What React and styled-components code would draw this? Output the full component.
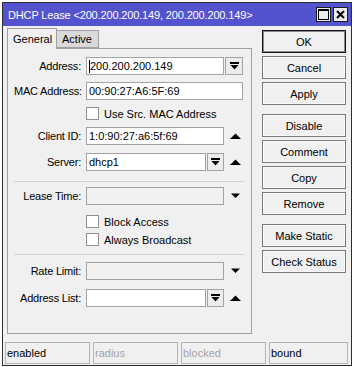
import React from 'react';
import styled, { createGlobalStyle } from 'styled-components';

const Global = createGlobalStyle`
  body {
    margin: 0;
    background: #ffffff;
    font-family: "Liberation Sans", Arial, sans-serif;
    font-size: 11px;
    color: #000;
  }
`;

// --- icons ---
const DropIcon = () => (
  <svg width="9" height="8" viewBox="0 0 9 8">
    <rect x="0" y="0" width="9" height="2" fill="#000" />
    <polygon points="0.5,3 8.5,3 4.5,7.5" fill="#000" />
  </svg>
);

const UpArrow = () => (
  <svg width="11" height="6" viewBox="0 0 11 6">
    <polygon points="0,6 11,6 5.5,0.5" fill="#000" />
  </svg>
);

const DownArrow = () => (
  <svg width="11" height="6" viewBox="0 0 11 6">
    <polygon points="1,0.5 10,0.5 5.5,5" fill="#000" />
  </svg>
);

const MaxIcon = () => (
  <svg width="11" height="11" viewBox="0 0 11 11">
    <rect x="0.5" y="0.5" width="10" height="10" fill="none" stroke="#000" strokeWidth="1" />
    <rect x="0" y="0" width="11" height="2" fill="#000" />
  </svg>
);

const CloseIcon = () => (
  <svg width="9" height="9" viewBox="0 0 9 9">
    <path d="M1 1 L8 8 M8 1 L1 8" stroke="#000" strokeWidth="2" />
  </svg>
);

export default function App() {
  return (
    <>
      <Global />
      <Window>
        <TitleBar>
          <Title>DHCP Lease &lt;200.200.200.149, 200.200.200.149&gt;</Title>
          <TitleButtons>
            <TitleBtn><MaxIcon /></TitleBtn>
            <TitleBtn><CloseIcon /></TitleBtn>
          </TitleButtons>
        </TitleBar>
        <Body>
          <Main>
            <LeftCol>
              <Tabs>
                <Tab active>General</Tab>
                <Tab>Active</Tab>
              </Tabs>
              <Panel>
                <Section top={8} bottom={10} line>
                  <Row>
                    <Label>Address:</Label>
                    <Field w={138}><Caret />200.200.200.149</Field>
                    <DropBtn w={18}><DropIcon /></DropBtn>
                  </Row>
                  <Row mt={7}>
                    <Label>MAC Address:</Label>
                    <Field w={157}>00:90:27:A6:5F:69</Field>
                  </Row>
                  <CheckRow mt={7}>
                    <Box />
                    <CheckText>Use Src. MAC Address</CheckText>
                  </CheckRow>
                  <Row mt={7}>
                    <Label>Client ID:</Label>
                    <Field w={138}>1:0:90:27:a6:5f:69</Field>
                    <Arrow><UpArrow /></Arrow>
                  </Row>
                  <Row mt={8}>
                    <Label>Server:</Label>
                    <Field w={120}>dhcp1</Field>
                    <DropBtn w={17}><DropIcon /></DropBtn>
                    <Arrow><UpArrow /></Arrow>
                  </Row>
                </Section>
                <Section top={5} bottom={8} line>
                  <Row>
                    <Label>Lease Time:</Label>
                    <Field w={138} disabled />
                    <Arrow><DownArrow /></Arrow>
                  </Row>
                  <CheckRow mt={10}>
                    <Box />
                    <CheckText>Block Access</CheckText>
                  </CheckRow>
                  <CheckRow mt={5}>
                    <Box />
                    <CheckText>Always Broadcast</CheckText>
                  </CheckRow>
                </Section>
                <Section top={7} bottom={0}>
                  <Row>
                    <Label>Rate Limit:</Label>
                    <Field w={138} disabled />
                    <Arrow><DownArrow /></Arrow>
                  </Row>
                  <Row mt={9}>
                    <Label>Address List:</Label>
                    <Field w={120} />
                    <DropBtn w={17}><DropIcon /></DropBtn>
                    <Arrow><UpArrow /></Arrow>
                  </Row>
                </Section>
              </Panel>
            </LeftCol>
            <Buttons>
              <Group>
                <Btn primary>OK</Btn>
                <Btn>Cancel</Btn>
                <Btn>Apply</Btn>
              </Group>
              <Group>
                <Btn>Disable</Btn>
                <Btn>Comment</Btn>
                <Btn>Copy</Btn>
                <Btn>Remove</Btn>
              </Group>
              <Group>
                <Btn>Make Static</Btn>
                <Btn>Check Status</Btn>
              </Group>
            </Buttons>
          </Main>
          <StatusBar>
            <Cell w={85}>enabled</Cell>
            <Cell w={85} dim>radius</Cell>
            <Cell w={85} dim>blocked</Cell>
            <Cell grow>bound</Cell>
          </StatusBar>
        </Body>
      </Window>
    </>
  );
}

// styled-components
const Window = styled.div`
  margin: 2px;
  width: 350px;
  height: 364px;
  box-sizing: border-box;
  border: 1px solid #2e2e2e;
  background: #f0f0f0;
  display: flex;
  flex-direction: column;
`;

const TitleBar = styled.div`
  height: 23px;
  flex: none;
  background: #5353cf;
  display: flex;
  align-items: center;
  padding: 0 3px 0 5px;
`;

const Title = styled.div`
  flex: 1;
  color: #ffffff;
  font-size: 11px;
  letter-spacing: -0.15px;
  white-space: nowrap;
`;

const TitleButtons = styled.div`
  display: flex;
  gap: 2px;
`;

const TitleBtn = styled.div`
  width: 15px;
  height: 15px;
  box-sizing: border-box;
  border: 1px solid #1c1c1c;
  background: #ececec;
  display: flex;
  align-items: center;
  justify-content: center;
`;

const Body = styled.div`
  flex: 1;
  display: flex;
  flex-direction: column;
`;

const Main = styled.div`
  flex: 1;
  display: flex;
  padding: 2px 0 0 4px;
`;

const LeftCol = styled.div`
  width: 245px;
  display: flex;
  flex-direction: column;
`;

const Tabs = styled.div`
  height: 20px;
  display: flex;
  align-items: flex-end;
`;

const Tab = styled.div`
  position: relative;
  z-index: 1;
  box-sizing: border-box;
  width: ${p => (p.active ? '50px' : '42px')};
  height: ${p => (p.active ? '21px' : '18px')};
  margin-bottom: ${p => (p.active ? '-1px' : '0')};
  padding: ${p => (p.active ? '4px' : '2px')} 0 0 5px;
  border: 1px solid #a0a0a0;
  border-bottom: ${p => (p.active ? 'none' : '1px solid #a0a0a0')};
  border-left: ${p => (p.active ? '1px solid #a0a0a0' : 'none')};
  background: ${p => (p.active ? '#f0f0f0' : '#d9d9d9')};
`;

const Panel = styled.div`
  height: 286px;
  box-sizing: border-box;
  border: 1px solid #a0a0a0;
  display: flex;
  flex-direction: column;
`;

const Section = styled.div`
  margin: 0 7px 0 6px;
  padding-top: ${p => p.top}px;
  padding-bottom: ${p => p.bottom}px;
  border-bottom: ${p => (p.line ? '1px solid #d0d0d0' : 'none')};
  display: flex;
  flex-direction: column;
`;

const Row = styled.div`
  height: 18px;
  margin-top: ${p => p.mt || 0}px;
  display: flex;
  align-items: center;
`;

const Label = styled.div`
  width: 67px;
  margin-right: 5px;
  text-align: right;
  white-space: nowrap;
  letter-spacing: -0.2px;
`;

const Field = styled.div`
  width: ${p => p.w}px;
  height: 18px;
  box-sizing: border-box;
  border: 1px solid #a3a3a3;
  background: ${p => (p.disabled ? '#f0f0f0' : '#ffffff')};
  padding: 0 2px;
  line-height: 16px;
  display: flex;
  align-items: center;
  white-space: nowrap;
`;

const Caret = styled.span`
  display: inline-block;
  width: 1px;
  height: 13px;
  background: #000;
`;

const DropBtn = styled.div`
  width: ${p => p.w}px;
  height: 18px;
  margin-left: 1px;
  box-sizing: border-box;
  border: 1px solid #a3a3a3;
  background: #ececec;
  display: flex;
  align-items: center;
  justify-content: center;
`;

const Arrow = styled.div`
  width: 11px;
  margin-left: 6px;
  display: flex;
  align-items: center;
`;

const CheckRow = styled.div`
  height: 13px;
  margin-top: ${p => p.mt || 0}px;
  padding-left: 72px;
  display: flex;
  align-items: center;
`;

const Box = styled.div`
  width: 13px;
  height: 13px;
  box-sizing: border-box;
  border: 1px solid #919191;
  background: #ffffff;
`;

const CheckText = styled.span`
  margin-left: 5px;
  white-space: nowrap;
`;

const Buttons = styled.div`
  width: 84px;
  margin: 2px 0 0 10px;
  display: flex;
  flex-direction: column;
  gap: 9px;
`;

const Group = styled.div`
  display: flex;
  flex-direction: column;
  gap: 3px;
`;

const Btn = styled.button`
  width: 84px;
  height: 23px;
  box-sizing: border-box;
  margin: 0;
  padding: 0;
  font-family: "Liberation Sans", Arial, sans-serif;
  font-size: 11px;
  color: #000;
  background: #f0f0f0;
  border: 1px solid ${p => (p.primary ? '#141414' : '#7a7a7a')};
  box-shadow: inset 0 0 0 1px ${p => (p.primary ? '#8a8a8a' : '#fafafa')};
  border-radius: 0;
`;

const StatusBar = styled.div`
  flex: none;
  display: flex;
  gap: 3px;
  padding: 0 3px 1px 2px;
`;

const Cell = styled.div`
  width: ${p => (p.grow ? 'auto' : `${p.w}px`)};
  flex: ${p => (p.grow ? '1' : 'none')};
  height: 22px;
  box-sizing: border-box;
  border: 1px solid #b4b4b4;
  padding-left: 1px;
  display: flex;
  align-items: center;
  color: ${p => (p.dim ? '#a4a4a4' : '#000')};
`;
